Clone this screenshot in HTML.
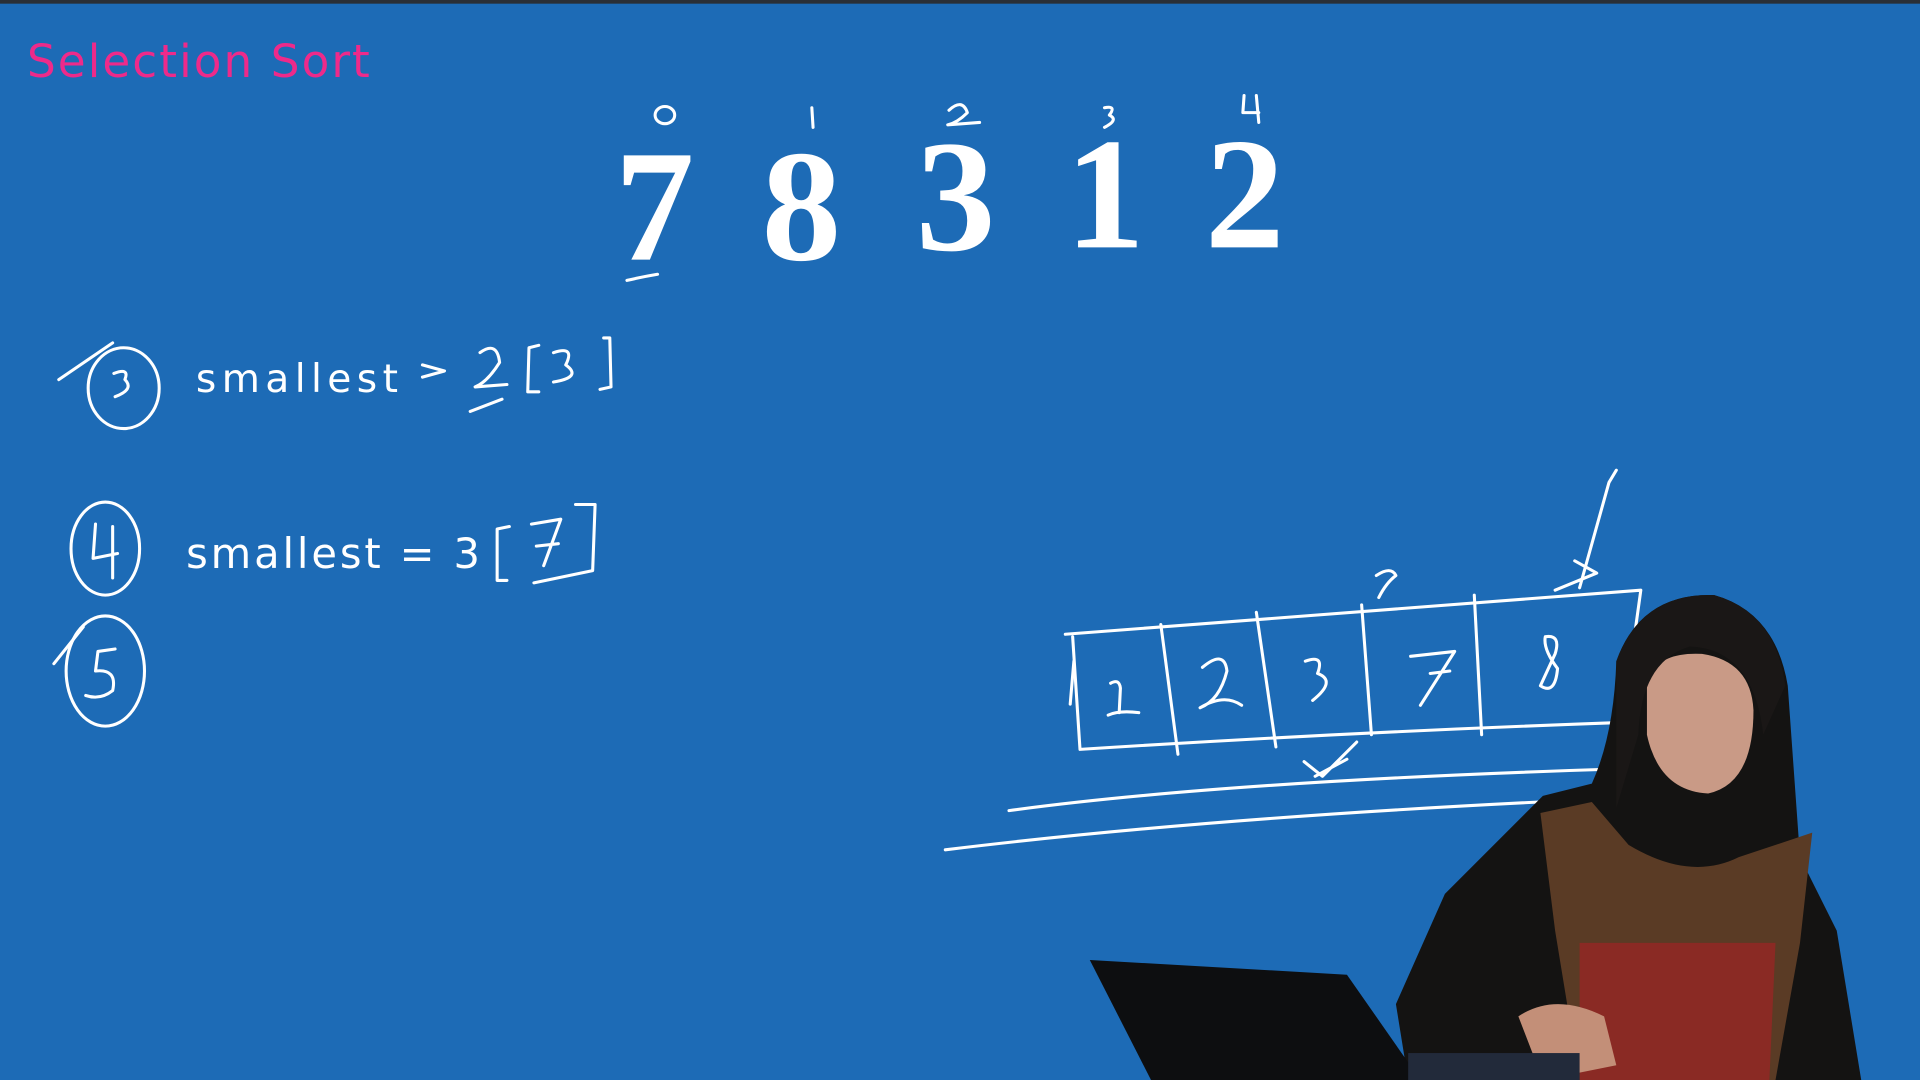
<!DOCTYPE html>
<html><head><meta charset="utf-8"><style>
html,body{margin:0;padding:0;width:1920px;height:1080px;overflow:hidden;background:#1d6bb6}
svg{display:block}
</style></head><body>
<svg width="1920" height="1080" viewBox="0 0 1568 882" xmlns="http://www.w3.org/2000/svg">
<rect width="1568" height="882" fill="#1d6bb6"/>
<rect width="1568" height="3" fill="#2a2f36"/>
<text x="22" y="63" font-family="'DejaVu Sans',sans-serif" font-size="37" fill="#ee2a8a" textLength="280">Selection Sort</text>
<g font-family="'Liberation Serif',serif" font-weight="bold" font-size="130" fill="#fff">
<text x="502" y="212" textLength="72">7</text><text x="622" y="212" textLength="74">8</text><text x="748" y="204" textLength="74">3</text><text x="870" y="202" textLength="64">1</text><text x="984" y="202" textLength="74">2</text>
</g>
<g fill="none" stroke="#fff" stroke-width="2.5" stroke-linecap="round" stroke-linejoin="round">
<ellipse cx="543" cy="94" rx="8" ry="7"/>
<path d="M663 88 L664 104"/>
<path d="M775 90 Q786 80 790 92 Q782 100 774 102 L800 100"/>
<path d="M902 88 Q912 86 906 94 Q914 98 902 104"/>
<path d="M1016 78 L1015 92 L1028 92 M1026 78 L1028 100"/>
<path d="M512 229 Q525 226 537 224"/>
<ellipse cx="101" cy="317" rx="29" ry="33"/><path d="M48 310 L92 280"/>
<path d="M93 305 Q106 300 102 310 Q110 318 94 324"/>
<text x="160" y="320" font-family="'Comic Sans MS','DejaVu Sans',sans-serif" font-size="32" fill="#fff" stroke="none" textLength="165">smallest</text>
<path d="M345 298 L363 303 L345 308"/>
<path d="M392 288 Q406 278 408 296 Q398 312 388 316 L414 314 M384 336 L410 326"/>
<path d="M440 282 L432 284 L431 320 L440 320 M493 276 L498 276 L499 316 L490 318"/>
<path d="M452 288 Q470 282 462 298 Q476 308 452 312"/>
<ellipse cx="86" cy="448" rx="28" ry="38"/>
<path d="M78 428 L76 456 L96 452 M92 430 L92 472"/>
<text x="152" y="464" font-family="'Comic Sans MS','DejaVu Sans',sans-serif" font-size="34" fill="#fff" stroke="none" textLength="240">smallest = 3</text>
<path d="M416 430 L406 432 L406 474 L414 474 M470 412 L486 412 L484 466 L436 476"/>
<path d="M434 428 L458 424 L444 462 M438 446 L456 444"/>
<ellipse cx="86" cy="548" rx="32" ry="45"/><path d="M44 542 L68 512"/>
<path d="M94 530 L80 532 L78 548 Q96 546 92 564 Q82 572 70 568"/>
<path d="M870 518 L1340 482 L1325 590 Q1100 598 882 612 L876 520"/>
<path d="M948 510 L962 616 M1026 500 L1042 610 M1112 494 L1120 600 M1204 486 L1210 600"/>
<path d="M877 540 L874 575"/>
<path d="M907 558 Q914 554 915 562 L914 582 M905 584 Q914 580 930 582"/>
<path d="M982 545 Q1000 530 1002 548 Q996 572 980 578 Q1000 566 1014 576"/>
<path d="M1066 540 Q1082 534 1076 550 Q1092 556 1072 572"/>
<path d="M1152 536 L1188 532 L1160 576 M1168 550 L1184 548"/>
<path d="M1262 520 Q1275 518 1270 534 L1258 560 Q1270 568 1272 546 Q1260 530 1262 520"/>
<path d="M1124 470 Q1136 462 1140 470 Q1132 476 1126 488"/>
<path d="M1065 622 L1080 634 L1108 606 M1100 620 L1074 634"/>
<path d="M1320 384 L1314 394 L1290 480 M1270 482 L1304 468 L1286 458"/>
<path d="M824 662 Q1000 638 1320 628"/>
<path d="M772 694 Q1000 666 1320 652"/>
</g>
<!-- person -->
<path d="M1320 540 Q1340 484 1400 486 Q1450 500 1460 560 L1470 700 L1500 760 L1520 882 L1150 882 L1140 820 L1180 730 L1260 650 L1300 640 Q1318 600 1320 540Z" fill="#141312"/>
<path d="M1345 560 Q1350 532 1390 534 Q1430 540 1432 580 Q1432 640 1395 648 Q1355 646 1345 600Z" fill="#c99a86"/>
<path d="M1320 540 Q1340 484 1400 486 Q1450 500 1458 560 L1440 600 Q1432 530 1380 528 Q1340 540 1338 600 L1320 660Z" fill="#1a1716"/>
<path d="M1258 664 L1300 655 L1330 690 Q1380 720 1420 700 L1480 680 L1470 770 L1450 882 L1290 882 L1270 760Z" fill="#5a3b25"/>
<path d="M1290 770 L1450 770 L1445 882 L1290 882Z" fill="#8a2a24"/>
<path d="M1240 830 Q1270 810 1310 830 L1320 870 L1260 882Z" fill="#c38f78"/>
<path d="M890 784 L1100 796 L1160 882 L940 882Z" fill="#0d0e10"/>
<rect x="1150" y="860" width="140" height="22" fill="#222a3a"/>
</svg>
</body></html>
